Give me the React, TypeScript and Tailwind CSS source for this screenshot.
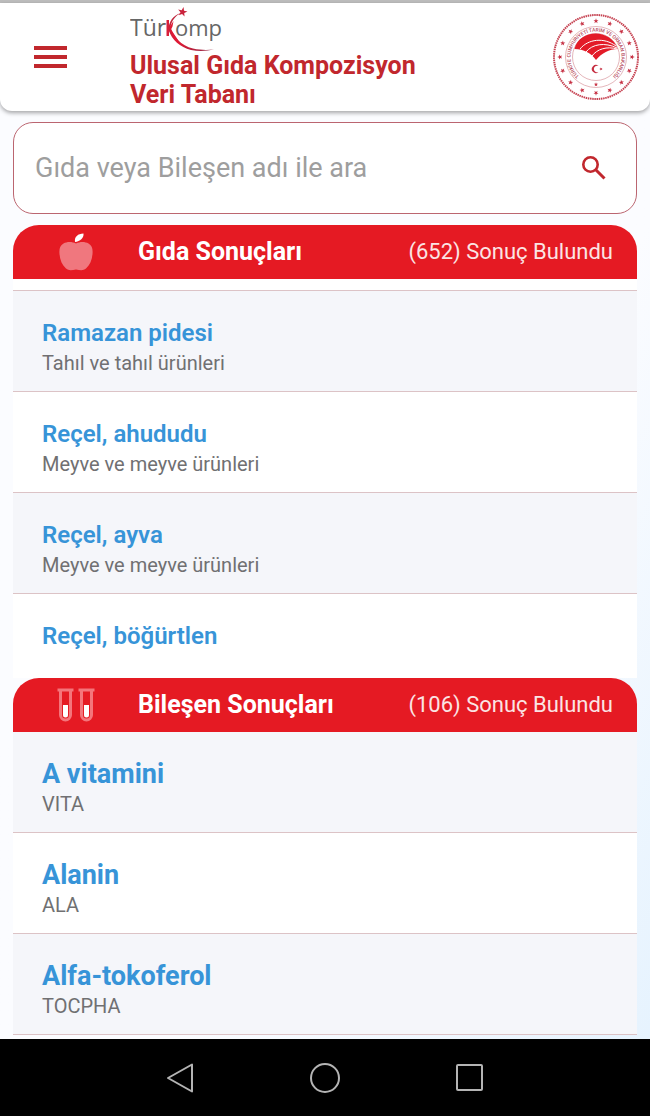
import type { ReactNode } from "react";

interface ResultItem {
  name: string;
  detail?: string;
}

interface ResultSectionProps {
  title: string;
  count: number;
  icon: ReactNode;
  items: ResultItem[];
  large?: boolean;
  scrolled?: boolean;
}

const foods: ResultItem[] = [
  { name: "Ramazan pidesi", detail: "Tahıl ve tahıl ürünleri" },
  { name: "Reçel, ahududu", detail: "Meyve ve meyve ürünleri" },
  { name: "Reçel, ayva", detail: "Meyve ve meyve ürünleri" },
  { name: "Reçel, böğürtlen" },
];

const components: ResultItem[] = [
  { name: "A vitamini", detail: "VITA" },
  { name: "Alanin", detail: "ALA" },
  { name: "Alfa-tokoferol", detail: "TOCPHA" },
];

const STAR = "M0 -1L.24 -.32L.95 -.31L.38 .12L.59 .81L0 .4L-.59 .81L-.38 .12L-.95 -.31L-.24 -.32Z";

function TurkompLogo() {
  return (
    <svg viewBox="0 0 96 46" className="block h-[46px] w-24" role="img" aria-label="TürKomp">
      <defs>
        <linearGradient id="swoosh" x1="0" y1="0" x2="1" y2="1">
          <stop offset="0" stopColor="#b3263c" />
          <stop offset="0.5" stopColor="#e01a35" />
          <stop offset="1" stopColor="#8f2b45" />
        </linearGradient>
      </defs>
      <text y="31" fontSize="23" fontFamily="'Open Sans', 'Noto Sans', sans-serif" fill="#666">
        <tspan x="0">Tür</tspan>
        <tspan x="45" fontSize="22">omp</tspan>
      </text>
      <path d="M36.500 15H39V31H36.500Z" fill="#d91f3a" />
      <path d="M51 8C45 11 41.500 16 40.500 22C43 31 51 41 63 43.500C71 45.300 78 45 84 44.500C77 46 69 46.500 61 45C50 42 42 35 38.500 25C38.500 17 43 10 51 8Z" fill="url(#swoosh)" />
      <path d="M39 23L43.500 16L42.500 21.500L41 24.500L46 32L50 38L44 33Z" fill="#e01a35" />
      <path d={STAR} transform="translate(52.5 7) rotate(12) scale(5)" fill="#c9233c" />
    </svg>
  );
}

function MinistryEmblem() {
  const stars = Array.from({ length: 16 }, (_, i) => i * 22.5);

  return (
    <svg viewBox="-44 -44 88 88" className="block size-[88px]" role="img" aria-label="Tarım ve Orman Bakanlığı">
      <defs>
        <path id="ring" d="M-12 22.500A25.500 25.500 0 1 1 12 22.500" />
      </defs>
      <circle r="42" fill="none" stroke="#c64352" strokeWidth="2" strokeDasharray="1.500 0.700" />
      <circle r="30.500" fill="none" stroke="#d9969d" strokeWidth="0.700" />
      <circle r="23.500" fill="none" stroke="#d9969d" strokeWidth="0.700" />
      {stars.map((angle) => (
        <path key={angle} d={STAR} transform={`rotate(${angle}) translate(0 -36) scale(2.700)`} fill="#c62f42" />
      ))}
      <path d={STAR} transform="translate(0 27.500) scale(2.200)" fill="#c62f42" />
      <text fontSize="5" fontFamily="Roboto, sans-serif" fontWeight="500" fill="#b5485a">
        <textPath href="#ring" startOffset="50%" textAnchor="middle">
          TÜRKİYE CUMHURİYETİ TARIM VE ORMAN BAKANLIĞI
        </textPath>
      </text>
      <path d="M-21.500 -8C-17 -28 15 -29 21.500 -8C13 -8 6 -4 0 3C-5 -4 -12 -8 -21.500 -8Z" fill="#e31b28" />
      <path d="M-16 -8C-8 -18 8 -20 20 -11M-10 -5C-4 -13 9 -15 21 -9M-4 -1C1 -8 11 -11 21 -8" fill="none" stroke="#fff" strokeWidth="1" />
      <path d="M2.500 9A4 4 0 1 0 2.500 15A3.300 3.300 0 1 1 2.500 9Z" fill="#c62f42" />
      <path d={STAR} transform="translate(5 12) rotate(-18) scale(1.700)" fill="#c62f42" />
    </svg>
  );
}

function AppleIcon() {
  return (
    <svg viewBox="0 0 34 38" className="h-[38px] w-[34px]" aria-hidden="true">
      <path
        d="M17 10.500C13 8.500 8 8.500 4.500 10.500C1 12.500 0 16 .5 21C1 27 3 32 7 35.500C10 38 13 37 17 36.500C21 37 24 38 27 35.500C31 32 33 27 33.500 21C34 16 33 12.500 29.500 10.500C26 8.500 21 8.500 17 10.500Z"
        fill="#f0777e"
      />
      <path d="M16 9C15 4 19 .5 24.500 .5C25 5 21 8.500 16 9Z" fill="#fff" />
    </svg>
  );
}

function TubesIcon() {
  return (
    <svg viewBox="0 0 38 34" className="h-[34px] w-[38px]" aria-hidden="true">
      <path
        d="M.5 2H16.500M21.500 2H37.500M3.500 3V27A5 5 0 0 0 13.500 27V3M24.500 3V27A5 5 0 0 0 34.500 27V3"
        fill="none"
        stroke="#f4757b"
        strokeWidth="3"
      />
      <path d="M6 17H11V27A2.500 2.500 0 0 1 6 27ZM27 17H32V27A2.500 2.500 0 0 1 27 27Z" fill="#fff" />
    </svg>
  );
}

function ResultSection({ title, count, icon, items, large = false, scrolled = false }: ResultSectionProps) {
  return (
    <section>
      <div className="flex h-[54px] items-center rounded-t-[26px] bg-[#e51a23] pr-6 text-white">
        <div className="flex w-[125px] justify-center">{icon}</div>
        <h2 className="text-[25px] leading-7 font-bold">{title}</h2>
        <p className="ml-auto text-[22px] leading-7 text-[#fbe4e4]">({count}) Sonuç Bulundu</p>
      </div>
      <ul className={scrolled ? "bg-white pt-[11px]" : "bg-white"}>
        {items.map((item, index) => (
          <li
            key={item.name}
            className={`border-[#dcc3c6] ${scrolled && index === 0 ? "border-t" : ""} ${item.detail ? "border-b" : ""} ${
              index % 2 === 0 ? "bg-[#f5f6fa]" : "bg-white"
            }`}
          >
            <a href="#" className={`block px-[29px] pt-7 ${item.detail ? "pb-3" : "pb-7"}`}>
              <span
                className={
                  large
                    ? "block text-[27px] leading-7 font-bold text-[#3794d8]"
                    : "block text-[24px] leading-7 font-semibold text-[#3794d8]"
                }
              >
                {item.name}
              </span>
              {item.detail ? <span className="block text-[20px] leading-8 text-[#707072]">{item.detail}</span> : null}
            </a>
          </li>
        ))}
      </ul>
    </section>
  );
}

export default function App() {
  return (
    <div className="flex min-h-screen flex-col bg-linear-to-br from-[#fbfcff] from-60% to-[#e4f2fe] font-[Roboto,sans-serif]">
      <div className="h-[3px] bg-[#bdbdbd]" />
      <header className="flex h-[108px] items-center rounded-b-xl bg-white pr-[10px] pl-[34px] shadow-[0_2px_4px_rgba(0,0,0,0.35)]">
        <button type="button" aria-label="Menü" className="mr-[63px] flex w-[33px] flex-col gap-[5px]">
          <span className="h-1 bg-[#c1272d]" />
          <span className="h-1 bg-[#c1272d]" />
          <span className="h-1 bg-[#c1272d]" />
        </button>
        <div>
          <TurkompLogo />
          <h1 className="max-w-80 text-[25px] leading-[29px] font-bold text-[#c1272d]">
            Ulusal Gıda Kompozisyon Veri Tabanı
          </h1>
        </div>
        <div className="ml-auto">
          <MinistryEmblem />
        </div>
      </header>

      <main className="flex-1 px-[13px] pt-[11px] pb-1">
        <form
          role="search"
          className="mb-[11px] flex h-[92px] items-center rounded-[20px] border border-[#bb6570] bg-white pr-[26px] pl-[21px]"
        >
          <input
            type="search"
            aria-label="Gıda veya Bileşen adı ile ara"
            placeholder="Gıda veya Bileşen adı ile ara"
            className="min-w-0 flex-1 text-[27px] leading-8 outline-none placeholder:text-[#9e9e9e]"
          />
          <button type="button" aria-label="Ara" className="p-1">
            <svg viewBox="0 0 24 24" className="size-6" fill="none" stroke="#c1272d" strokeWidth="2.600">
              <circle cx="8.500" cy="8.500" r="7.200" />
              <path d="M14 14L22.500 22.500" strokeWidth="3" />
            </svg>
          </button>
        </form>

        <ResultSection title="Gıda Sonuçları" count={652} icon={<AppleIcon />} items={foods} scrolled />
        <ResultSection title="Bileşen Sonuçları" count={106} icon={<TubesIcon />} items={components} large />
      </main>

      <nav className="flex h-[77px] items-center justify-center gap-[115px] bg-black">
        <button type="button" aria-label="Geri">
          <svg viewBox="0 0 30 30" className="size-[30px]" fill="none" stroke="#b4b4b4" strokeWidth="2" strokeLinejoin="round">
            <path d="M27 1.500V28.500L3 15Z" />
          </svg>
        </button>
        <button type="button" aria-label="Ana ekran">
          <svg viewBox="0 0 30 30" className="size-[30px]" fill="none" stroke="#b4b4b4" strokeWidth="2">
            <circle cx="15" cy="15" r="14" />
          </svg>
        </button>
        <button type="button" aria-label="Son uygulamalar">
          <svg viewBox="0 0 30 30" className="size-[30px]" fill="none" stroke="#b4b4b4" strokeWidth="2">
            <rect x="2" y="2" width="25" height="25" rx="1" />
          </svg>
        </button>
      </nav>
    </div>
  );
}
